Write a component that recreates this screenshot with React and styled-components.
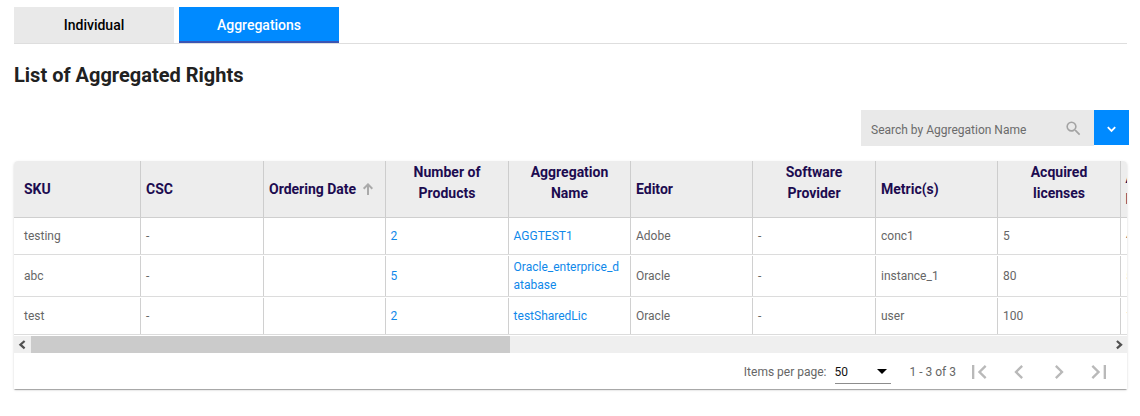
import React from "react";
import styled, { createGlobalStyle, css } from "styled-components";

const GlobalStyle = createGlobalStyle`
  * { box-sizing: border-box; }
  body { margin: 0; background: #fff; font-family: Roboto, "Liberation Sans", sans-serif; overflow: hidden; }
`;

const Page = styled.main`
  width: 1140px;
  height: 416px;
  padding: 7px 11px 0 14px;
`;

const Tabs = styled.nav`
  display: flex;
  gap: 5px;
  width: 1113px;
  height: 37px;
  border-bottom: 1px solid #dedede;
`;

const Tab = styled.button`
  width: 160px;
  height: 36px;
  padding: 0;
  border: 0;
  font: 500 14px/36px Roboto, sans-serif;
  background: ${(p) => (p.$active ? "#008aff" : "#e9e9e9")};
  color: ${(p) => (p.$active ? "#fff" : "#000")};
  box-shadow: ${(p) => (p.$active ? "inset 0 -2px 0 #3a55b4" : "none")};
`;

const Title = styled.h1`
  margin: 15px 0 0;
  font: 700 20px/32px Roboto, sans-serif;
  color: #212121;
`;

const SearchBar = styled.div`
  display: flex;
  justify-content: flex-end;
  height: 36px;
  margin-top: 19px;
`;

const SearchField = styled.div`
  display: flex;
  align-items: center;
  justify-content: space-between;
  width: 233px;
  padding: 3px 11px 0 10px;
  background: #e9e9e9;
  color: #6b6b6b;
  font-size: 12px;
`;

const SearchIcon = styled.svg`
  margin-top: -2px;
`;

const SearchToggle = styled.button`
  display: flex;
  align-items: center;
  justify-content: center;
  width: 35px;
  height: 35px;
  padding: 3px 0 0;
  border: 0;
  background: #008aff;
`;

const Card = styled.section`
  width: 1113px;
  height: 228px;
  margin-top: 15px;
  overflow: hidden;
  border-radius: 4px 4px 0 0;
  background: #fff;
`;

const CardShadow = styled.div`
  width: 1113px;
  border-radius: 4px 4px 0 0;
  box-shadow: 0 2px 1px -1px rgba(0, 0, 0, 0.2), 0 1px 1px rgba(0, 0, 0, 0.14), 0 1px 3px rgba(0, 0, 0, 0.12);
`;

const rowGrid = css`
  display: grid;
  grid-template-columns: 127px 123px 122px 123px 122px 122px 123px 122px 123px 122px;
  width: 1229px;
`;

const HeaderRow = styled.div`
  ${rowGrid}
  height: 57px;
  background: #ededed;
  border-bottom: 1px solid #cfcfcf;
`;

const HeaderCell = styled.div`
  display: flex;
  align-items: ${(p) => (p.$top !== undefined ? "flex-start" : "center")};
  justify-content: ${(p) => (p.$centered ? "center" : "flex-start")};
  padding: ${(p) => p.$top ?? 0}px 5px 0 ${(p) => p.$left ?? 5}px;
  border-right: 1px solid #cdcdcd;
  color: #1c0b50;
  font-weight: 700;
  font-size: 14px;
  line-height: 21px;
  text-align: ${(p) => (p.$centered ? "center" : "left")};
  white-space: pre-line;
`;

const SortArrow = styled.svg`
  flex: none;
  margin: -1px 0 0 6px;
`;

const Row = styled.div`
  ${rowGrid}
  height: ${(p) => p.$height}px;
  padding-top: ${(p) => (p.$gap ? 1 : 0)}px;
  border-bottom: 1px solid #dcdcdc;
`;

const Cell = styled.div`
  display: flex;
  align-items: center;
  padding: 0 5px 0 ${(p) => (p.$first ? 10 : p.$link ? 4.6 : 5)}px;
  border-right: 1px solid #d0d0d0;
  color: ${(p) => (p.$link ? "#0f88ea" : "#666")};
  font-size: 12px;
  line-height: 18px;
  word-break: break-all;
`;

const Scrollbar = styled.div`
  display: flex;
  align-items: center;
  height: 17px;
  margin-top: 1px;
  background: #efefef;
`;

const ScrollArrow = styled.svg`
  flex: none;
  width: 17px;
  height: 17px;
`;

const ScrollTrack = styled.div`
  flex: 1;
  height: 17px;
`;

const ScrollThumb = styled.div`
  width: 479px;
  height: 17px;
  background: #cbcbcb;
`;

const Paginator = styled.footer`
  display: flex;
  align-items: center;
  justify-content: flex-end;
  height: 37px;
  padding-right: 8px;
  color: #666;
  font-size: 12px;
`;

const PageSize = styled.div`
  display: flex;
  align-items: center;
  justify-content: space-between;
  width: 56px;
  height: 23px;
  margin: 1px 19px 0 8px;
  padding-right: 4px;
  border-bottom: 1px solid #8d8d8d;
  color: #111;
`;

const Range = styled.span`
  width: 49.5px;
  padding-top: 1px;
  white-space: nowrap;
`;

const PageButton = styled.button`
  display: flex;
  align-items: center;
  justify-content: center;
  width: 40px;
  height: 36px;
  padding: 1px 0 0;
  border: 0;
  background: none;
`;

const HEADERS = [
  { text: "SKU", left: 10 },
  { text: "CSC" },
  { text: "Ordering Date", sorted: true },
  { text: "Number of\nProducts", top: 1, centered: true },
  { text: "Aggregation\nName", top: 1, centered: true },
  { text: "Editor" },
  { text: "Software\nProvider", top: 1, centered: true },
  { text: "Metric(s)" },
  { text: "Acquired\nlicenses", top: 1, centered: true },
  { text: "Available\nLicenses", top: 7, left: 4.4 },
];

const ROWS = [
  { height: 37, cells: ["testing", "-", "", "2", "AGGTEST1", "Adobe", "-", "conc1", "5", "4"] },
  { height: 42, cells: ["abc", "-", "", "5", "Oracle_enterprice_database", "Oracle", "-", "instance_1", "80", "50"] },
  { height: 38, cells: ["test", "-", "", "2", "testSharedLic", "Oracle", "-", "user", "100", "100"] },
];

const PAGE_ICONS = {
  first: "M18.41 16.59L13.82 12l4.59-4.59L17 6l-6 6 6 6zM6 6h2v12H6z",
  previous: "M15.41 7.41L14 6l-6 6 6 6 1.41-1.41L10.83 12z",
  next: "M10 6L8.59 7.41 13.17 12l-4.58 4.59L10 18l6-6z",
  last: "M5.59 7.41L10.18 12l-4.59 4.59L7 18l6-6-6-6zM16 6h2v12h-2z",
};

export default function App() {
  return (
    <>
      <GlobalStyle />
      <Page>
        <Tabs>
          <Tab>Individual</Tab>
          <Tab $active>Aggregations</Tab>
        </Tabs>
        <Title>List of Aggregated Rights</Title>
        <SearchBar>
          <SearchField>
            Search by Aggregation Name
            <SearchIcon width="19" height="19" viewBox="0 0 24 24" fill="#a3a3a3">
              <path d="M15.5 14h-.79l-.28-.27A6.471 6.471 0 0 0 16 9.5 6.5 6.5 0 1 0 9.5 16c1.61 0 3.09-.59 4.23-1.57l.27.28v.79l5 4.99L20.49 19l-4.99-5zm-6 0C7.01 14 5 11.99 5 9.5S7.01 5 9.5 5 14 7.01 14 9.5 11.99 14 9.5 14z" />
            </SearchIcon>
          </SearchField>
          <SearchToggle aria-label="Advanced search">
            <svg width="9" height="7" viewBox="0 0 9 7" fill="none" stroke="#fff" strokeWidth="1.8">
              <path d="M0.8 1.2L4.5 4.9L8.2 1.2" />
            </svg>
          </SearchToggle>
        </SearchBar>
        <CardShadow>
          <Card>
            <HeaderRow>
              {HEADERS.map((h, i) => (
                <HeaderCell key={i} $left={h.left} $centered={h.centered} $top={h.top}>
                  {h.text}
                  {h.sorted && (
                    <SortArrow width="12" height="12" viewBox="0 0 12 12" fill="none" stroke="#aaa" strokeWidth="2">
                      <path d="M6 12V1.5M1.7 5.7L6 1.4L10.3 5.7" />
                    </SortArrow>
                  )}
                </HeaderCell>
              ))}
            </HeaderRow>
            {ROWS.map((row, r) => (
              <Row key={r} $height={row.height} $gap={r > 0}>
                {row.cells.map((text, i) => (
                  <Cell key={i} $first={i === 0} $link={i === 3 || i === 4}>
                    {text}
                  </Cell>
                ))}
              </Row>
            ))}
            <Scrollbar>
              <ScrollArrow viewBox="0 0 17 17" fill="none" stroke="#505050" strokeWidth="2.2">
                <path d="M10.6 5L6.4 8.7L10.6 12.4" />
              </ScrollArrow>
              <ScrollTrack>
                <ScrollThumb />
              </ScrollTrack>
              <ScrollArrow viewBox="0 0 17 17" fill="none" stroke="#505050" strokeWidth="2.2">
                <path d="M6.9 5L11.1 8.7L6.9 12.4" />
              </ScrollArrow>
            </Scrollbar>
            <Paginator>
              Items per page:
              <PageSize>
                50
                <svg width="10" height="5" viewBox="0 0 10 5">
                  <path d="M0 0H10L5 5Z" />
                </svg>
              </PageSize>
              <Range>1 - 3 of 3</Range>
              {Object.entries(PAGE_ICONS).map(([name, d]) => (
                <PageButton key={name} aria-label={`${name} page`}>
                  <svg width="28" height="28" viewBox="0 0 24 24" fill="#b9b9b9">
                    <path d={d} />
                  </svg>
                </PageButton>
              ))}
            </Paginator>
          </Card>
        </CardShadow>
      </Page>
    </>
  );
}
